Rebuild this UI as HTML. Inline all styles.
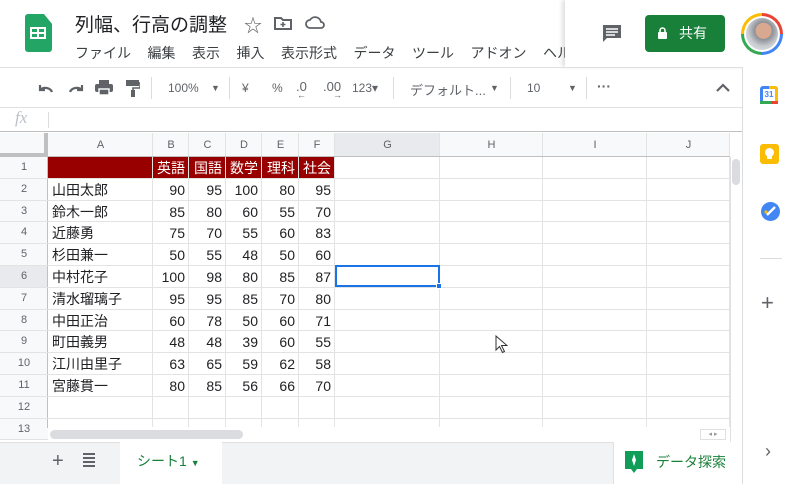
<!DOCTYPE html>
<html><head><meta charset="utf-8"><style>
*{box-sizing:border-box;margin:0;padding:0}
body{width:800px;height:484px;overflow:hidden;background:#fff;position:relative;font-family:"Liberation Sans","Noto Sans CJK JP",sans-serif;color:#202124}
.a{position:absolute}
.menu span{margin-right:16.5px}
.tb{color:#5f6368;font-size:12px}
.hd{background:#f8f9fa;color:#5f6368;font-size:11px;text-align:center}
.vl{position:absolute;width:1px;background:#e2e3e3}
.hl{position:absolute;height:1px;background:#e2e3e3}
.cell{position:absolute;font-size:14px;height:22px;line-height:22px}
.n{text-align:right;padding-right:4px}
</style></head><body>
<div class="a" style="left:25px;top:14px;width:27px;height:38px;background:#23a566;border-radius:3px;clip-path:polygon(0 0,70% 0,100% 26%,100% 100%,0 100%)"></div>
<div class="a" style="left:30px;top:27px;width:16px;height:12px;border:2px solid #fff;background:#23a566"></div>
<div class="a" style="left:37px;top:27px;width:2px;height:12px;background:#fff"></div>
<div class="a" style="left:30px;top:32px;width:16px;height:2px;background:#fff"></div>
<div class="a" style="left:75px;top:10px;font-size:19px;color:#202124">列幅、行高の調整</div>
<div class="a" style="left:244px;top:12px;font-size:18px;color:#5f6368">☆</div>
<svg class="a" style="left:274px;top:16px" width="18" height="14"><path d="M1 2h6l2 2h8v9H1z" fill="none" stroke="#5f6368" stroke-width="2"/><path d="M9 6v5M6.5 8.5h5" stroke="#5f6368" stroke-width="1.6"/></svg>
<svg class="a" style="left:305px;top:16px" width="20" height="14"><path d="M5 12a4 4 0 0 1 0-8 6 6 0 0 1 11 2 3 3 0 0 1 0 6z" fill="none" stroke="#5f6368" stroke-width="1.8"/></svg>
<div class="a menu" style="left:75px;top:43px;font-size:14px;color:#3c4043;white-space:nowrap"><span>ファイル</span><span>編集</span><span>表示</span><span>挿入</span><span>表示形式</span><span>データ</span><span>ツール</span><span>アドオン</span><span>ヘルプ</span></div>
<div class="a" style="left:565px;top:0;width:235px;height:67px;background:#fff;box-shadow:-3px 0 4px rgba(0,0,0,.12)"></div>
<svg class="a" style="left:602px;top:24px" width="22" height="20"><path d="M1 1h18v13H5l-4 4z" fill="#5f6368"/><path d="M4 5h12M4 8h12M4 11h9" stroke="#fff" stroke-width="1.4"/></svg>
<div class="a" style="left:645px;top:15px;width:80px;height:37px;background:#188038;border-radius:4px;color:#fff;font-size:14px;line-height:37px;padding-left:34px">共有</div>
<svg class="a" style="left:657px;top:27px" width="11" height="13"><rect x="1" y="5" width="9" height="7" rx="1" fill="#fff"/><path d="M3 5V3.5a2.5 2.5 0 0 1 5 0V5" stroke="#fff" stroke-width="1.6" fill="none"/></svg>
<div class="a" style="left:741px;top:13px;width:42px;height:42px;border-radius:50%;background:conic-gradient(#ea4335 0 25%,#4285f4 25% 50%,#34a853 50% 75%,#fbbc05 75%)"></div>
<div class="a" style="left:744px;top:16px;width:36px;height:36px;border-radius:50%;background:#fff"></div>
<div class="a" style="left:746px;top:18px;width:32px;height:32px;border-radius:50%;background:radial-gradient(circle at 55% 40%,#d8a890 0 30%,#8a8f96 32%,#c9ccd0 60%,#e8eaed)"></div>
<div class="hl" style="left:0;top:67px;width:742px;background:#e0e0e0"></div>
<div class="hl" style="left:0;top:107px;width:742px;background:#e0e0e0"></div>
<svg class="a" style="left:37px;top:81px" width="48" height="14"><path d="M3 4v5h5M3 9a7 6 0 0 1 12 2" fill="none" stroke="#5f6368" stroke-width="2.2"/><path d="M45 4v5h-5M45 9a7 6 0 0 0-12 2" fill="none" stroke="#5f6368" stroke-width="2.2"/></svg>
<svg class="a" style="left:95px;top:80px" width="18" height="15"><rect x="0" y="4" width="18" height="8" rx="2" fill="#5f6368"/><rect x="4" y="0" width="10" height="4" fill="#5f6368"/><rect x="4" y="9" width="10" height="6" fill="#5f6368" stroke="#fff" stroke-width="1.4"/></svg>
<svg class="a" style="left:126px;top:80px" width="14" height="17"><rect x="0" y="0" width="13" height="6" fill="#5f6368"/><path d="M13 3h1v5H7v3" fill="none" stroke="#5f6368" stroke-width="1.6"/><rect x="5" y="10" width="4" height="7" fill="#5f6368"/></svg>
<div class="a" style="left:151px;top:77px;width:1px;height:22px;background:#dadce0"></div>
<div class="a tb" style="left:168px;top:81px">100%</div>
<div class="a tb" style="left:211px;top:83px;font-size:9px">▼</div>
<div class="a" style="left:229px;top:77px;width:1px;height:22px;background:#dadce0"></div>
<div class="a tb" style="left:242px;top:81px">¥</div>
<div class="a tb" style="left:272px;top:81px">%</div>
<div class="a tb" style="left:296px;top:79px;font-size:13px">.0</div>
<div class="a tb" style="left:297px;top:90px;font-size:9px">←</div>
<div class="a tb" style="left:323px;top:79px;font-size:13px">.00</div>
<div class="a tb" style="left:333px;top:90px;font-size:9px">→</div>
<div class="a tb" style="left:352px;top:81px">123▾</div>
<div class="a" style="left:393px;top:77px;width:1px;height:22px;background:#dadce0"></div>
<div class="a tb" style="left:410px;top:80px;font-size:13px">デフォルト...</div>
<div class="a tb" style="left:490px;top:83px;font-size:9px">▼</div>
<div class="a" style="left:510px;top:77px;width:1px;height:22px;background:#dadce0"></div>
<div class="a tb" style="left:527px;top:81px">10</div>
<div class="a tb" style="left:568px;top:83px;font-size:9px">▼</div>
<div class="a" style="left:586px;top:77px;width:1px;height:22px;background:#dadce0"></div>
<div class="a tb" style="left:597px;top:78px;font-size:14px;font-weight:bold">···</div>
<svg class="a" style="left:716px;top:83px" width="14" height="9"><path d="M1 8l6-6 6 6" fill="none" stroke="#5f6368" stroke-width="2.2"/></svg>
<div class="a" style="left:15px;top:108px;font-family:'Liberation Serif',serif;font-style:italic;font-size:17px;color:#bdc1c6">fx</div>
<div class="a" style="left:48px;top:112px;width:1px;height:16px;background:#dadce0"></div>
<div class="hl" style="left:0;top:131px;width:742px;background:#c0c0c0"></div>
<div class="a hd" style="left:0;top:133px;width:730px;height:24px"></div>
<div class="a hd" style="left:0;top:133px;width:48px;height:307px"></div>
<div class="a" style="left:0;top:133px;width:48px;height:24px;background:#f8f9fa;border-right:4px solid #c0c0c0;border-bottom:4px solid #c0c0c0"></div>
<div class="a hd" style="left:0;top:265px;width:48px;height:22px;background:#e8eaed"></div>
<div class="a hd" style="left:335px;top:133px;width:105px;height:24px;background:#e8eaed"></div>
<div class="a" style="left:48px;top:157px;width:287px;height:22px;background:#980000"></div>
<div id="g"></div>
<div class="a" style="left:335px;top:265px;width:105px;height:22px;border:2px solid #1a73e8"></div>
<div class="a" style="left:436px;top:283px;width:6px;height:6px;background:#1a73e8;border:1px solid #fff"></div>
<div class="a" style="left:730px;top:157px;width:12px;height:285px;background:#fff;border-left:1px solid #e0e0e0"></div>
<div class="a" style="left:732px;top:159px;width:8px;height:26px;background:#dadce0;border-radius:4px"></div>
<div class="a" style="left:48px;top:427px;width:682px;height:15px;background:#fff"></div>
<div class="a" style="left:50px;top:430px;width:193px;height:9px;background:#dadce0;border-radius:5px"></div>
<div class="a" style="left:700px;top:429px;width:26px;height:11px;border:1px solid #e0e0e0;font-size:7px;color:#999;text-align:center;line-height:9px">◂ ▸</div>
<div class="a" style="left:0;top:442px;width:742px;height:42px;background:#f1f3f4;border-top:1px solid #e0e0e0"></div>
<div class="a" style="left:52px;top:450px;font-size:20px;color:#5f6368">+</div>
<div class="a" style="left:83px;top:453px;width:12px;height:14px;background:repeating-linear-gradient(#5f6368 0 2px,transparent 2px 4px)"></div>
<div class="a" style="left:120px;top:442px;width:102px;height:42px;background:#fff;color:#188038;font-size:14px;line-height:38px;padding-left:17px">シート1 <span style="font-size:9px">▼</span></div>
<div class="a" style="left:613px;top:442px;width:129px;height:42px;background:#fff;border-left:1px solid #e0e0e0"></div>
<svg class="a" style="left:625px;top:450px" width="18" height="25"><path d="M0 1h18v18h-6l-3 4-3-4H0z" fill="#0f9d58"/><path d="M9 4l2 6 -2 6-2-6z" fill="#fff"/></svg>
<div class="a" style="left:656px;top:452px;font-size:14px;color:#188038">データ探索</div>
<div class="a" style="left:742px;top:67px;width:58px;height:417px;background:#fff;border-left:1px solid #dadce0"></div>
<div class="a" style="left:760px;top:86px;width:18px;height:18px;border-radius:3px;background:linear-gradient(90deg,#4285f4 0 50%,#fbbc05 50%);"></div>
<div class="a" style="left:763px;top:89px;width:12px;height:12px;background:#fff;font-size:8px;color:#4285f4;text-align:center;line-height:12px;font-weight:bold">31</div>
<div class="a" style="left:760px;top:101px;width:18px;height:3px;background:linear-gradient(90deg,#34a853 0 60%,#ea4335 60%)"></div>
<div class="a" style="left:760px;top:144px;width:19px;height:20px;border-radius:3px;background:#fbbc04"></div>
<div class="a" style="left:765px;top:148px;width:9px;height:9px;border-radius:50%;background:#fff"></div>
<div class="a" style="left:767px;top:156px;width:5px;height:3px;background:#fff"></div>
<div class="a" style="left:761px;top:202px;width:19px;height:19px;border-radius:50%;background:#4285f4"></div>
<svg class="a" style="left:761px;top:202px" width="19" height="19"><path d="M6 13l8-8" stroke="#fff" stroke-width="2.4"/><circle cx="5" cy="10" r="1.6" fill="#fbbc04"/></svg>
<div class="a" style="left:760px;top:258px;width:22px;height:1px;background:#dadce0"></div>
<div class="a" style="left:761px;top:290px;font-size:22px;color:#5f6368;font-weight:300">+</div>
<div class="a" style="left:765px;top:441px;font-size:18px;color:#5f6368">›</div>
<svg class="a" style="left:495px;top:335px" width="13" height="19"><path d="M1 1v14l3.5-3.5 3 6 2-1-3-6H12z" fill="#fff" stroke="#333" stroke-width="1"/></svg>
<script>
var cols=[48,153,189,226,262,299,335,440,543,647,730];
var names=['A','B','C','D','E','F','G','H','I','J'];
var data=[["","英語","国語","数学","理科","社会"],["山田太郎",90,95,100,80,95],["鈴木一郎",85,80,60,55,70],["近藤勇",75,70,55,60,83],["杉田兼一",50,55,48,50,60],["中村花子",100,98,80,85,87],["清水瑠璃子",95,95,85,70,80],["中田正治",60,78,50,60,71],["町田義男",48,48,39,60,55],["江川由里子",63,65,59,62,58],["宮藤貫一",80,85,56,66,70]];
var h='';var rh=21.8,t0=157;
for(var i=0;i<cols.length;i++){h+='<div class="vl" style="left:'+(cols[i]-1)+'px;top:133px;height:295px;background:'+(i==0?'#c0c0c0':'#e2e3e3')+'"></div>';}
for(var i=0;i<10;i++){h+='<div class="a hd" style="left:'+cols[i]+'px;top:133px;width:'+(cols[i+1]-cols[i])+'px;height:24px;line-height:24px;background:transparent">'+names[i]+'</div>';}
h+='<div class="hl" style="left:0;top:156px;width:730px;background:#c0c0c0"></div>';
for(var r=0;r<13;r++){var y=t0+r*rh;
h+='<div class="hl" style="left:0;top:'+Math.round(y+rh-1)+'px;width:730px"></div>';
h+='<div class="a hd" style="left:0;top:'+Math.round(y)+'px;width:48px;height:22px;line-height:20px;background:transparent">'+(r+1)+'</div>';
if(r<11){var d=data[r];for(var c=0;c<6;c++){if(d[c]==="")continue;
var col=r==0?'#fff':'#202124';
h+='<div class="cell '+(c>0?'n':'')+'" style="left:'+(cols[c]+(c==0?4:0))+'px;top:'+Math.round(y)+'px;width:'+(cols[c+1]-cols[c])+'px;color:'+col+'">'+d[c]+'</div>';}}}
document.getElementById('g').innerHTML=h;
</script>
</body></html>
